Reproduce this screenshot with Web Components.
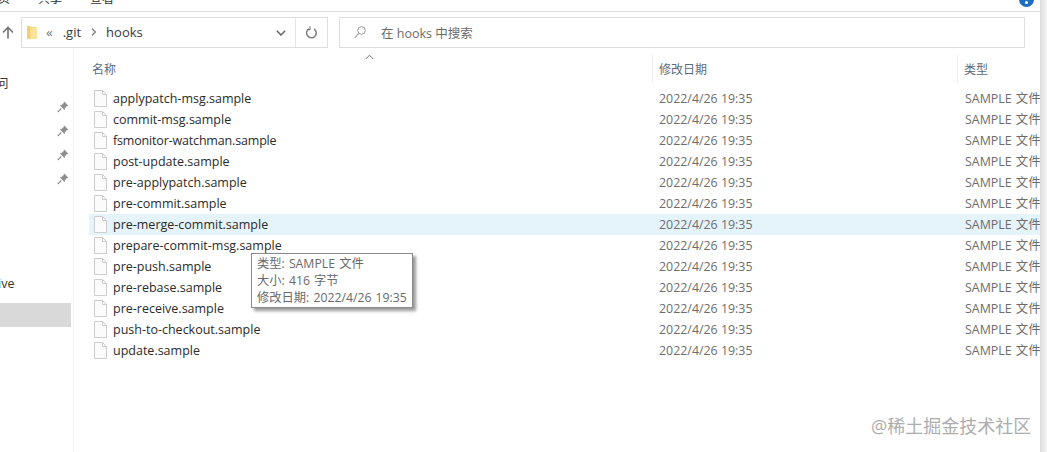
<!DOCTYPE html>
<html><head><meta charset="utf-8"><style>
html,body{margin:0;padding:0;background:#fff;}
body{width:1047px;height:452px;overflow:hidden;font-family:"Open Sans","Noto Sans CJK SC",sans-serif;}
</style></head><body>
<explorer-window></explorer-window>
<template id="t-row"><style>
:host{display:grid;grid-template-columns:24px 546px 306px 1fr;height:21px;align-items:center;font-size:12.5px;line-height:21px;white-space:nowrap}
:host([hover]){background:#e5f3fb}
.ic{display:flex;padding-left:5px}
.n{color:#2b2b2b}
.d,.t{color:#6d6d6d;font-size:12.4px;letter-spacing:0}
.t{overflow:hidden;word-spacing:1px}
</style><span class="ic"><svg width="13" height="17" viewBox="0 0 13 17"><path d="M.5.5h8l4 4v12H.5z" fill="#fbfbfb" stroke="#cdcdcd"/><path d="M8.500.5v4h4" fill="none" stroke="#cdcdcd"/></svg></span><span class="n"><slot></slot></span><span class="d">2022/4/26 19:35</span><span class="t">SAMPLE 文件</span></template>
<script>
const PIN=`<svg width="12" height="12" viewBox="0 0 12 12"><path d="M7.200.6 11.200 4.600 9.900 5.200 7.800 7.300 7.600 9.200 2.600 4.200 4.600 4 6.700 1.900z" fill="#8e8e8e"/><path d="M4.300 7.500.8 11" stroke="#8e8e8e" stroke-width="1.100"/></svg>`;
class FileRow extends HTMLElement{constructor(){super();this.attachShadow({mode:'open'}).append(document.getElementById('t-row').content.cloneNode(true));}}
customElements.define('file-row',FileRow);
class AddressBar extends HTMLElement{constructor(){super();this.attachShadow({mode:'open'}).innerHTML=`<style>
:host{display:flex;height:31px;box-sizing:border-box;font-size:13px;color:#333}
.up{width:21px;box-sizing:border-box;padding-right:6px;display:flex;justify-content:center;align-items:center}
.addr{width:307px;box-sizing:border-box;border:1px solid #dedede;display:flex;align-items:center;margin-right:11px}
.crumbs{flex:1;display:flex;align-items:center;padding:0 0 2px 5px;color:#3a3a3a}
.crumbs span{display:block}
.dd{width:28px;display:flex;justify-content:center}
.rf{width:31px;height:100%;border-left:1px solid #e6e6e6;display:flex;justify-content:center;align-items:center}
.search{width:686px;box-sizing:border-box;border:1px solid #dedede;display:flex;align-items:center;padding:0 0 1px 14px;gap:15px;color:#6b6b6b;font-size:12.5px}
</style>
<span class="up"><svg width="12" height="13" viewBox="0 0 12 13"><path d="M6 12.500V1.500M1 6.500l5-5 5 5" fill="none" stroke="#777" stroke-width="1.700"/></svg></span>
<div class="addr"><div class="crumbs">
<svg style="margin-bottom:-2px" width="10" height="14" viewBox="0 0 10 14"><path d="M0 0h3l1 1h5.500l.5 12H0z" fill="#f3d06f"/><path d="M3.500 1.500h6.500V13H3.500z" fill="#fae39c"/></svg>
<span style="margin-left:9px;color:#777;font-size:13.500px">«</span><span style="margin-left:10px">.git</span>
<svg style="margin:0 9px 0 10px" width="6" height="8" viewBox="0 0 6 8"><path d="M1 .8 4.400 4 1 7.200" fill="none" stroke="#777" stroke-width="1.200"/></svg>
<span>hooks</span></div>
<span class="dd"><svg width="10" height="6" viewBox="0 0 10 6"><path d="M.8.8 5 5l4.200-4.200" fill="none" stroke="#666" stroke-width="1.500"/></svg></span>
<span class="rf"><svg width="12" height="13" viewBox="0 0 12 13"><path d="M3 2.900a4.800 4.800 0 1 0 5 .1" fill="none" stroke="#808080" stroke-width="1.500"/><path d="M4 .2v3.400H.8" fill="none" stroke="#808080" stroke-width="1.200"/></svg></span></div>
<div class="search"><svg width="12" height="13" viewBox="0 0 12 13"><circle cx="7.500" cy="4.500" r="3.800" fill="none" stroke="#9a9a9a"/><path d="M4.700 7.300 .7 12" stroke="#9a9a9a" stroke-width="1.100"/></svg><span>在 hooks 中搜索</span></div>`;}}
customElements.define('address-bar',AddressBar);
class ColHead extends HTMLElement{constructor(){super();this.attachShadow({mode:'open'}).innerHTML=`<style>
:host{display:grid;grid-template-columns:564px 305px 1fr;height:40px;font-size:12px;color:#5a6b80;position:relative}
div{display:flex;align-items:center;border-right:1px solid #eee;height:28px;margin-top:7px;white-space:nowrap}
div:last-of-type{border:0}
svg{position:absolute;left:276px;top:6px}
</style><div style="padding-left:3px">名称</div><div style="padding-left:6px">修改日期</div><div style="padding-left:6px">类型</div><svg width="9" height="6" viewBox="0 0 9 6"><path d="M.8 5 4.500 1.200 8.200 5" fill="none" stroke="#777"/></svg>`;}}
customElements.define('col-head',ColHead);
class NavPane extends HTMLElement{constructor(){super();this.attachShadow({mode:'open'}).innerHTML=`<style>
:host{display:flex;flex-direction:column;flex:none;width:74px;border-right:1px solid #f2f2f2;box-sizing:border-box;font-size:12.5px;color:#333;height:100%;overflow:hidden}
.l{height:24px;display:flex;align-items:center;justify-content:flex-end;padding-right:4px}
</style>
<div style="margin-top:25px;height:18px;display:flex;align-items:center;margin-left:-4px">问</div>
<div style="height:4px"></div>
<div class="l">${PIN}</div><div class="l">${PIN}</div><div class="l">${PIN}</div><div class="l">${PIN}</div>
<div style="height:82px"></div>
<div style="height:20px;display:flex;align-items:center;margin-left:-2px">ive</div>
<div style="height:10px"></div>
<div style="height:24px;background:#d9d9d9;margin-right:2px"></div>`;}}
customElements.define('nav-pane',NavPane);
class ExplorerWindow extends HTMLElement{constructor(){super();const names=['applypatch-msg','commit-msg','fsmonitor-watchman','post-update','pre-applypatch','pre-commit','pre-merge-commit','prepare-commit-msg','pre-push','pre-rebase','pre-receive','push-to-checkout','update'];
this.attachShadow({mode:'open'}).innerHTML=`<style>
:host{display:flex;flex-direction:column;width:1047px;height:452px;position:relative;overflow:hidden}
.menu{height:11px;border-bottom:1px solid #dcdcdc;font-size:12px;color:#333;display:flex;flex:none;overflow:hidden;line-height:8px;gap:28px;align-items:flex-start}
.menu span{margin-top:-5px}
.menu span:first-child{margin-left:-14px}
.main{display:flex;flex:1;min-height:0}
.files{flex:1;padding-left:15px;min-width:0}
.top{padding-top:5px;flex:none}
.sb{position:absolute;right:0;top:0;bottom:0;width:7px;background:linear-gradient(to right,#dcdcdc,#f6f6f6)}
.help{position:absolute;left:1019px;top:-8px;width:15px;height:15px;border-radius:50%;background:#1e6fc0;display:flex;justify-content:center;align-items:flex-end}
.help i{display:block;width:3px;height:3px;background:#fff;border-radius:50%;margin-bottom:3px}
.tip{position:absolute;left:251px;top:253px;width:162px;height:55px;box-sizing:border-box;background:#fff;border:1px solid #8a8a8a;box-shadow:3px 3px 3px #9a9a9a;font-size:12.25px;line-height:17px;color:#6a6a6a;padding:1px 5px;white-space:nowrap;word-spacing:1px}
.mark{position:absolute;left:871px;top:415px;font-size:18px;color:#adadad;line-height:22px;white-space:nowrap}
</style>
<div class="menu"><span>主页</span><span>共享</span><span>查看</span></div>
<div class="top"><address-bar></address-bar></div>
<div class="main"><nav-pane></nav-pane><div class="files"><col-head></col-head><div>${names.map((n,i)=>`<file-row${i==6?' hover':''}${i==2?' style="letter-spacing:-.17px"':''}>${n}.sample</file-row>`).join('')}</div></div></div>
<div class="sb"></div>
<div class="help"><i></i></div>
<div class="tip">类型: SAMPLE 文件<br>大小: 416 字节<br>修改日期: 2022/4/26 19:35</div>
<div class="mark">@稀土掘金技术社区</div>`;}}
customElements.define('explorer-window',ExplorerWindow);
</script></body></html>
